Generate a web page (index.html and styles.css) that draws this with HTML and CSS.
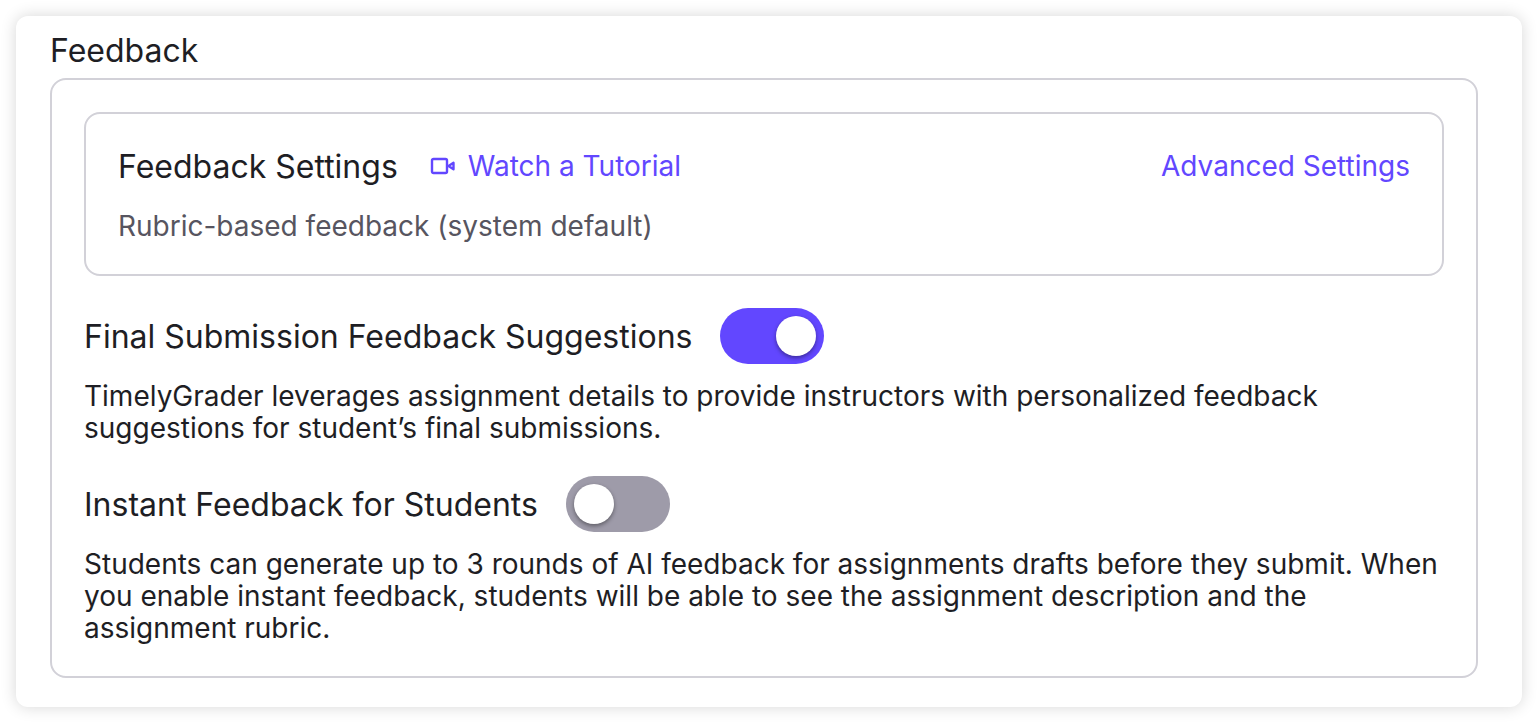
FILE: index.html
```html
<!DOCTYPE html>
<html lang="en">
<head>
  <meta charset="UTF-8" />
  <meta name="viewport" content="width=device-width, initial-scale=1" />
  <title>Feedback</title>
  <link rel="stylesheet" href="styles.css">
</head>
<body>
  <main class="card">
    <h1>Feedback</h1>

    <div class="panel">
      <!-- Feedback settings -->
      <section class="settings">
        <div class="settings-header">
          <h2>Feedback Settings</h2>
          <a class="tutorial" href="#tutorial">
            <svg class="icon" viewBox="0 0 26 18" aria-hidden="true">
              <rect x="2" y="2" width="15" height="14" rx="1.500" />
              <path d="M18.500 9l5-3.200v6.400z" />
            </svg>
            Watch a Tutorial
          </a>
          <a class="advanced" href="#advanced">Advanced Settings</a>
        </div>
        <p>Rubric-based feedback (system default)</p>
      </section>

      <!-- Toggles -->
      <section class="option">
        <div class="option-header">
          <label for="finalFeedback">Final Submission Feedback Suggestions</label>
          <input type="checkbox" role="switch" class="switch" id="finalFeedback" checked />
        </div>
        <p>TimelyGrader leverages assignment details to provide instructors with personalized feedback suggestions for student’s final submissions.</p>
      </section>

      <section class="option">
        <div class="option-header">
          <label for="instantFeedback">Instant Feedback for Students</label>
          <input type="checkbox" role="switch" class="switch" id="instantFeedback" />
        </div>
        <p>Students can generate up to 3 rounds of AI feedback for assignments drafts before they submit. When you enable instant feedback, students will be able to see the assignment description and the assignment rubric.</p>
      </section>
    </div>
  </main>
</body>
</html>
```

FILE: styles.css
```css
* {
  box-sizing: border-box;
}

body {
  margin: 0;
  padding: 16px;
  font-family: Inter, sans-serif;
  font-size: 28px;
  line-height: 32px;
  color: #1e1e24;
  background: #fff;
}

h1,
h2,
p {
  margin: 0;
  font-weight: 400;
}

h1,
h2,
label {
  padding-top: 2px;
  font-size: 32px;
  line-height: 38px;
}

a {
  color: #6247ff;
  text-decoration: none;
}

.card {
  padding: 14px 44px 29px 34px;
  background: #fff;
  border-radius: 12px;
  box-shadow: 0 0 16px rgba(0, 0, 0, 0.16);
}

.panel {
  display: flex;
  flex-direction: column;
  gap: 32px;
  margin-top: 8px;
  padding: 32px;
  border: 2px solid #d2d1d8;
  border-radius: 16px;
}

.settings {
  padding: 32px;
  border: 2px solid #d2d1d8;
  border-radius: 16px;
}

.settings-header {
  display: flex;
  align-items: center;
  margin-bottom: 24px;
}

.settings p {
  color: #575560;
}

.tutorial {
  display: flex;
  align-items: center;
  gap: 12px;
  margin-left: 32px;
}

.icon {
  width: 26px;
  height: 18px;
  fill: none;
  stroke: currentColor;
  stroke-width: 2.4;
  stroke-linejoin: round;
}

.advanced {
  margin-left: auto;
}

.option-header {
  display: flex;
  align-items: center;
  gap: 28px;
  margin-bottom: 16px;
}

.switch {
  appearance: none;
  display: flex;
  width: 104px;
  height: 56px;
  margin: 0;
  padding: 8px;
  border-radius: 28px;
  background: #9e9ba9;
  cursor: pointer;
}

.switch::before {
  content: "";
  width: 40px;
  height: 40px;
  border-radius: 50%;
  background: #fff;
  box-shadow: 0 2px 4px rgba(0, 0, 0, 0.4);
}

.switch:checked {
  justify-content: flex-end;
  background: #6247ff;
}
```
